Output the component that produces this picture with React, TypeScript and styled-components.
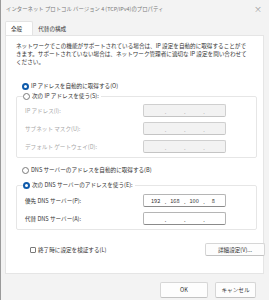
import React from "react";
import styled, { createGlobalStyle, css } from "styled-components";

const FONT = `"Noto Sans CJK JP", "Noto Sans", sans-serif`;

const Global = createGlobalStyle`
  html, body { margin: 0; padding: 0; background: #f3f3f3; }
  * { box-sizing: border-box; }
`;

const Window = styled.div`
  width: 269px;
  height: 300px;
  display: flex;
  flex-direction: column;
  background: #f3f3f3;
  border-left: 1px solid #9a9a9a;
  font-family: ${FONT};
  font-size: 5.6px;
  color: #333;
  overflow: hidden;
`;

const TitleBar = styled.div`
  height: 16px;
  display: flex;
  align-items: center;
  justify-content: space-between;
  padding: 2px 7px 0 5px;
  color: #7a7a7a;
  font-size: 5.4px;
`;

const Close = styled.span`
  font-size: 8px;
  color: #9a9a9a;
  line-height: 1;
`;

const Body = styled.div`
  padding: 5px 5px 0 4px;
  display: flex;
  flex-direction: column;
`;

const Tabs = styled.div`
  display: flex;
  align-items: flex-end;
  height: 14px;
`;

const Tab = styled.div<{ $active?: boolean }>`
  height: ${(p) => (p.$active ? 14 : 12)}px;
  display: flex;
  align-items: center;
  padding: 0 ${(p) => (p.$active ? 10 : 4)}px 0 5px;
  ${(p) =>
    p.$active &&
    css`
      background: #fff;
      border: 1px solid #e3e3e3;
      border-bottom: none;
      border-radius: 2px 2px 0 0;
    `}
`;

const Panel = styled.div`
  background: #fff;
  border: 1px solid #e5e5e5;
  height: 239px;
  padding: 6px 9px 0 9px;
  display: flex;
  flex-direction: column;
`;

const Description = styled.p`
  margin: 0 0 0 1px;
  line-height: 8px;
  white-space: nowrap;
`;

const RadioRow = styled.label<{ $mt: number }>`
  display: flex;
  align-items: center;
  gap: 2px;
  height: 8px;
  margin: ${(p) => p.$mt}px 0 0 7px;
`;

const Radio = styled.span<{ $on?: boolean }>`
  width: 7px;
  height: 7px;
  border-radius: 50%;
  flex: none;
  ${(p) =>
    p.$on
      ? css`
          background: #fff;
          border: 2px solid #0f5bab;
        `
      : css`
          border: 1px solid #7a7a7a;
          background: #fff;
        `}
`;

const Group = styled.fieldset<{ $mt: number; $pt: number; $pb: number }>`
  margin: ${(p) => p.$mt}px 0 0 1px;
  width: 241px;
  border: 1px solid #e6e6e6;
  border-radius: 2px;
  padding: ${(p) => p.$pt}px 0 ${(p) => p.$pb}px 8px;
  display: flex;
  flex-direction: column;
  gap: 5px;
  min-width: 0;
`;

const Legend = styled.legend`
  padding: 0 2px 0 0;
  margin-left: -2px;
  height: 8px;
  line-height: 8px;
`;

const LegendInner = styled.span`
  display: flex;
  align-items: center;
  gap: 2px;
`;

const FieldRow = styled.div<{ $disabled?: boolean }>`
  display: flex;
  align-items: center;
  justify-content: space-between;
  padding-right: 30px;
  height: 13px;
  color: ${(p) => (p.$disabled ? "#a8a8a8" : "#333")};
`;

const IpBox = styled.div<{ $disabled?: boolean }>`
  width: 83px;
  height: 13px;
  border: 1px solid ${(p) => (p.$disabled ? "#cfcfcf" : "#b5b5b5")};
  border-bottom-color: ${(p) => (p.$disabled ? "#c4c4c4" : "#8a8a8a")};
  border-radius: 2px;
  background: ${(p) => (p.$disabled ? "#f2f2f2" : "#fff")};
  display: grid;
  grid-template-columns: repeat(4, 1fr);
  align-items: center;
  font-size: 5.6px;
  color: ${(p) => (p.$disabled ? "#a8a8a8" : "#333")};
  padding: 0 2px;
`;

const Octet = styled.span`
  display: flex;
  justify-content: center;
  position: relative;
  height: 100%;
  align-items: center;
`;

const Dot = styled.span`
  position: absolute;
  right: -1px;
  top: 50%;
  transform: translateY(-40%);
`;

const BottomRow = styled.div`
  display: flex;
  align-items: center;
  justify-content: space-between;
  margin-top: 13px;
  padding-left: 15px;
  padding-right: 0;
  width: 250px;
`;

const CheckLabel = styled.label`
  display: flex;
  align-items: center;
  gap: 2px;
`;

const CheckBox = styled.span`
  width: 6px;
  height: 6px;
  border: 1px solid #7a7a7a;
  border-radius: 1px;
  background: #fff;
`;

const Button = styled.button<{ $w: number; $h: number }>`
  width: ${(p) => p.$w}px;
  height: ${(p) => p.$h}px;
  font-family: ${FONT};
  font-size: 5.6px;
  color: #333;
  background: #fdfdfd;
  border: 1px solid #d6d6d6;
  border-bottom-color: #c2c2c2;
  border-radius: 2px;
  padding: 0;
`;

const Footer = styled.div`
  display: flex;
  justify-content: flex-end;
  gap: 7px;
  padding: 8px 13px 0 0;
`;

const IpField: React.FC<{ values?: string[]; disabled?: boolean }> = ({ values = ["", "", "", ""], disabled }) => (
  <IpBox $disabled={disabled}>
    {values.map((v, i) => (
      <Octet key={i}>
        {v}
        {i < 3 && <Dot>.</Dot>}
      </Octet>
    ))}
  </IpBox>
);

export default function App() {
  return (
    <Window>
      <Global />
      <TitleBar>
        <span>インターネット プロトコル バージョン 4 (TCP/IPv4)のプロパティ</span>
        <Close>×</Close>
      </TitleBar>
      <Body>
        <Tabs>
          <Tab $active>全般</Tab>
          <Tab>代替の構成</Tab>
        </Tabs>
        <Panel>
          <Description>
            ネットワークでこの機能がサポートされている場合は、IP 設定を自動的に取得することがで
            <br />
            きます。サポートされていない場合は、ネットワーク管理者に適切な IP 設定を問い合わせて
            <br />
            ください。
          </Description>

          <RadioRow $mt={16}>
            <Radio $on />
            IP アドレスを自動的に取得する(O)
          </RadioRow>

          <Group $mt={2} $pt={4} $pb={4}>
            <Legend>
              <LegendInner>
                <Radio />
                次の IP アドレスを使う(S):
              </LegendInner>
            </Legend>
            <FieldRow $disabled>
              IP アドレス(I):
              <IpField disabled />
            </FieldRow>
            <FieldRow $disabled>
              サブネット マスク(U):
              <IpField disabled />
            </FieldRow>
            <FieldRow $disabled>
              デフォルト ゲートウェイ(D):
              <IpField disabled />
            </FieldRow>
          </Group>

          <RadioRow $mt={8}>
            <Radio />
            DNS サーバーのアドレスを自動的に取得する(B)
          </RadioRow>

          <Group $mt={7} $pt={5} $pb={4}>
            <Legend>
              <LegendInner>
                <Radio $on />
                次の DNS サーバーのアドレスを使う(E):
              </LegendInner>
            </Legend>
            <FieldRow>
              優先 DNS サーバー(P):
              <IpField values={["192", "168", "100", "8"]} />
            </FieldRow>
            <FieldRow>
              代替 DNS サーバー(A):
              <IpField />
            </FieldRow>
          </Group>

          <BottomRow>
            <CheckLabel>
              <CheckBox />
              終了時に設定を検証する(L)
            </CheckLabel>
            <Button $w={60} $h={13}>詳細設定(V)...</Button>
          </BottomRow>
        </Panel>
      </Body>
      <Footer>
        <Button $w={48} $h={16}>OK</Button>
        <Button $w={41} $h={16}>キャンセル</Button>
      </Footer>
    </Window>
  );
}
